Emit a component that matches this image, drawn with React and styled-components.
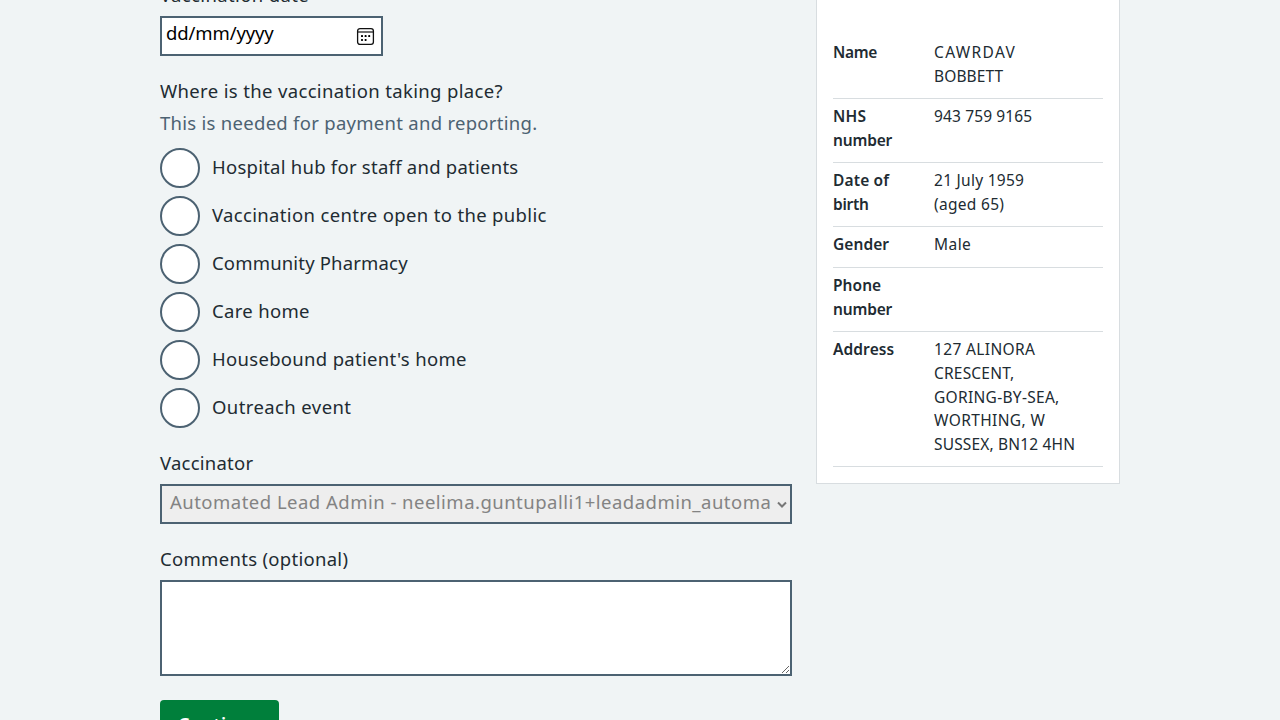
import React from "react";
import styled, { createGlobalStyle } from "styled-components";

const slate = "#4c6272";
const ink = "#212b32";
const line = "#d8dde0";

const GlobalStyle = createGlobalStyle`
  *, *::before, *::after { box-sizing: border-box; }
  body {
    margin: 0;
    background: #f0f4f5;
    color: ${ink};
    font-family: "Noto Sans", "Open Sans", sans-serif;
  }
`;

const Page = styled.main`
  height: 720px;
  overflow: hidden;
  display: flex;
  justify-content: center;
  align-items: flex-start;
  gap: 24px;
`;

const Form = styled.form`
  width: 632px;
  margin-top: -20px;
  font-size: 18.5px;
  line-height: 28px;
`;

const Text = styled.span`
  letter-spacing: ${(p) => p.$track || 0}px;
  white-space: pre;
`;

const Field = styled.div`
  margin-bottom: ${(p) => p.$gap ?? 20}px;
`;

const Label = styled.label`
  display: block;
  height: 36px;
  padding-top: 1px;
`;

const Fieldset = styled.fieldset`
  border: 0;
  margin: 0 0 20px;
  padding: 0;
  min-width: 0;
`;

const Legend = styled.legend`
  display: block;
  height: 33px;
  padding: 1px 0 0;
`;

const Hint = styled.div`
  height: 28px;
  margin-bottom: 11px;
  color: ${slate};
`;

const DateInput = styled.div`
  width: 223px;
  height: 40px;
  display: flex;
  align-items: center;
  justify-content: space-between;
  padding: 0 6px 7px 4px;
  border: 2px solid ${slate};
  background: #fff;
  color: #000;

  svg { display: block; margin-top: 7px; }
`;

const Radios = styled.div`
  display: grid;
  gap: 8px;
`;

const RadioRow = styled.label`
  display: flex;
  height: 40px;
  gap: 12px;
  line-height: 38px;
`;

const Radio = styled.input.attrs({ type: "radio" })`
  appearance: none;
  width: 40px;
  height: 40px;
  margin: 0;
  flex: none;
  border: 2px solid ${slate};
  border-radius: 50%;
  background: #fff;
`;

const Select = styled.div`
  height: 40px;
  display: flex;
  align-items: center;
  justify-content: space-between;
  padding: 0 3px 5px 8px;
  border: 2px solid ${slate};
  background: #eee;
  color: #838383;

  svg { display: block; margin-top: 6px; }
`;

const Textarea = styled.textarea`
  display: block;
  width: 100%;
  height: 96px;
  margin: 0;
  padding: 4px;
  border: 2px solid ${slate};
  border-radius: 0;
  background: #fff;
  font: inherit;
  outline: 0;
  resize: vertical;
`;

const Button = styled.button`
  display: block;
  width: 119px;
  height: 52px;
  padding: 0 0 4px;
  border: 0;
  border-radius: 4px;
  background: #007f3b;
  box-shadow: 0 4px 0 #00401e;
  color: #fff;
  font: 600 18px/28px "Noto Sans", sans-serif;
`;

const Card = styled.aside`
  width: 304px;
  height: 484px;
  padding: 35px 16px 0;
  border: 1px solid ${line};
  border-top: 0;
  background: #fff;
  font-size: 15.5px;
`;

const Summary = styled.dl`
  margin: 0;
`;

const SummaryRow = styled.div`
  display: grid;
  grid-template-columns: 101px 1fr;
  height: ${(p) => p.$height}px;
  padding-top: ${(p) => p.$pad ?? 5}px;
  line-height: ${(p) => p.$lead ?? 24}px;
  border-bottom: 1px solid ${line};
`;

const Cell = styled.div`
  margin: 0;
  font-weight: ${(p) => (p.$bold ? 600 : 400)};
  ${Text} { display: block; }
`;

const places = [
  ["Hospital hub for staff and patients", 0.25],
  ["Vaccination centre open to the public", 0.34],
  ["Community Pharmacy", 0.17],
  ["Care home", 0.31],
  ["Housebound patient's home", 0.31],
  ["Outreach event", 0.4],
];

const patient = [
  { height: 64, key: [["Name", -0.3]], value: [["CAWRDAV", 1.35], ["BOBBETT", 0.1]] },
  { height: 64, key: [["NHS", 0.2], ["number", -0.17]], value: [["943 759 9165", 0.13]] },
  { height: 64, key: [["Date of", 0.15], ["birth", -0.25]], value: [["21 July 1959", 0.27], ["(aged 65)", 0.3]] },
  { height: 41, key: [["Gender", 0.07]], value: [["Male", 0.45]] },
  { height: 64, key: [["Phone", 0.05], ["number", -0.17]], value: [] },
  {
    height: 135,
    pad: 6,
    lead: 23.75,
    key: [["Address", 0.1]],
    value: [
      ["127 ALINORA", 0.36],
      ["CRESCENT,", 0.2],
      ["GORING-BY-SEA,", 0.3],
      ["WORTHING, W", 0.38],
      ["SUSSEX, BN12 4HN", 0.17],
    ],
  },
];

const Calendar = () => (
  <svg width="19" height="19" viewBox="0 0 19 19" fill="none" stroke="#111">
    <rect x="1.6" y="1.6" width="15.8" height="15.8" rx="2.4" strokeWidth="1.3" />
    <path d="M2 5h15.5" strokeWidth="1.2" />
    <g fill="#000" stroke="none">
      <rect x="5" y="8.1" width="2" height="2" rx=".7" />
      <rect x="8.6" y="8.1" width="2" height="2" rx=".7" />
      <rect x="12.2" y="8.1" width="2" height="2" rx=".7" />
      <rect x="5" y="11.9" width="2" height="2" rx=".7" />
      <rect x="8.6" y="11.9" width="2" height="2" rx=".7" />
    </g>
  </svg>
);

const Chevron = () => (
  <svg width="10" height="8" viewBox="0 0 10 8" fill="none" stroke="#777" strokeWidth="2">
    <path d="M1 1.5l4 4 4-4" />
  </svg>
);

const Lines = ({ items }) =>
  items.map(([text, track]) => (
    <Text key={text} $track={track}>{text}</Text>
  ));

export default function App() {
  return (
    <>
      <GlobalStyle />
      <Page>
        <Form>
          <Field>
            <Label><Text $track={0.37}>Vaccination date</Text></Label>
            <DateInput>
              <Text $track={-0.12}>dd/mm/yyyy</Text>
              <Calendar />
            </DateInput>
          </Field>
          <Fieldset>
            <Legend><Text $track={0.35}>Where is the vaccination taking place?</Text></Legend>
            <Hint><Text $track={0.28}>This is needed for payment and reporting.</Text></Hint>
            <Radios>
              {places.map(([text, track]) => (
                <RadioRow key={text}>
                  <Radio name="place" />
                  <Text $track={track}>{text}</Text>
                </RadioRow>
              ))}
            </Radios>
          </Fieldset>
          <Field>
            <Label><Text $track={0.23}>Vaccinator</Text></Label>
            <Select>
              <Text $track={0.48}>Automated Lead Admin - neelima.guntupalli1+leadadmin_automa</Text>
              <Chevron />
            </Select>
          </Field>
          <Field $gap={24}>
            <Label><Text $track={0.3}>Comments (optional)</Text></Label>
            <Textarea />
          </Field>
          <Button type="button"><Text $track={0.4}>Continue</Text></Button>
        </Form>
        <Card>
          <Summary>
            {patient.map((row, i) => (
              <SummaryRow key={i} $height={row.height} $pad={row.pad} $lead={row.lead}>
                <Cell as="dt" $bold><Lines items={row.key} /></Cell>
                <Cell as="dd"><Lines items={row.value} /></Cell>
              </SummaryRow>
            ))}
          </Summary>
        </Card>
      </Page>
    </>
  );
}
